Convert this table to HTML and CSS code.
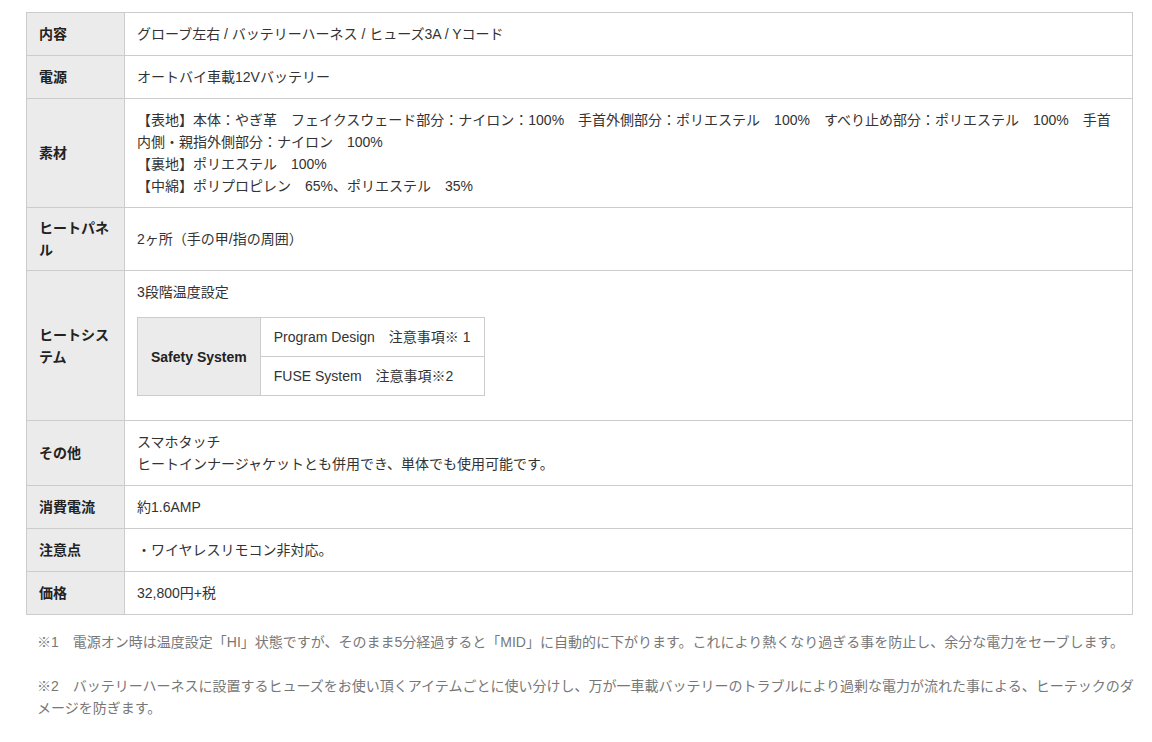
FILE: index.html
```html
<!DOCTYPE html>
<html lang="ja">
<head>
<meta charset="UTF-8">
<meta name="viewport" content="width=device-width, initial-scale=1.0">
<title>スペック</title>
<link rel="stylesheet" href="styles.css">
</head>
<body>

<div class="spec">
  <table class="spec-table">
    <tr>
      <th>内容</th>
      <td>グローブ左右 / バッテリーハーネス / ヒューズ3A / Yコード</td>
    </tr>
    <tr>
      <th>電源</th>
      <td>オートバイ車載12Vバッテリー</td>
    </tr>
    <tr>
      <th>素材</th>
      <td>【表地】本体：やぎ革　フェイクスウェード部分：ナイロン：100%　手首外側部分：ポリエステル　100%　すべり止め部分：ポリエステル　100%　手首内側・親指外側部分：ナイロン　100%<br>【裏地】ポリエステル　100%<br>【中綿】ポリプロピレン　65%、ポリエステル　35%</td>
    </tr>
    <tr>
      <th>ヒートパネル</th>
      <td>2ヶ所（手の甲/指の周囲）</td>
    </tr>
    <tr>
      <th>ヒートシステム</th>
      <td>
        <p class="cell-lead">3段階温度設定</p>
        <table class="sub-table">
          <tr>
            <th rowspan="2">Safety System</th>
            <td>Program Design　注意事項※ 1</td>
          </tr>
          <tr>
            <td>FUSE System　注意事項※2</td>
          </tr>
        </table>
      </td>
    </tr>
    <tr>
      <th>その他</th>
      <td>スマホタッチ<br>ヒートインナージャケットとも併用でき、単体でも使用可能です。</td>
    </tr>
    <tr>
      <th>消費電流</th>
      <td>約1.6AMP</td>
    </tr>
    <tr>
      <th>注意点</th>
      <td>・ワイヤレスリモコン非対応。</td>
    </tr>
    <tr>
      <th>価格</th>
      <td>32,800円+税</td>
    </tr>
  </table>

  <div class="notes">
    <p>※1　電源オン時は温度設定「HI」状態ですが、そのまま5分経過すると「MID」に自動的に下がります。これにより熱くなり過ぎる事を防止し、余分な電力をセーブします。</p>
    <p>※2　バッテリーハーネスに設置するヒューズをお使い頂くアイテムごとに使い分けし、万が一車載バッテリーのトラブルにより過剰な電力が流れた事による、ヒーテックのダメージを防ぎます。</p>
  </div>
</div>

</body>
</html>
```

FILE: styles.css
```css
/* Page */
body {
  margin: 0;
  background-color: #fff;
  color: #333;
  font-family: "Liberation Sans", "Noto Sans CJK JP", sans-serif;
  font-size: 14px;
  line-height: 22px;
}

.spec {
  width: 1107px;
  padding: 12px 0 0 26px;
}

/* Spec table */
.spec-table {
  width: 100%;
  border-collapse: collapse;
  border: 1px solid #ccc;
}

.spec-table th,
.spec-table td {
  border: 1px solid #ccc;
  padding: 10px 12px;
  vertical-align: middle;
  text-align: left;
}

.spec-table th {
  width: 73px;
  padding: 9px 12px;
  background-color: #ebebeb;
  font-weight: bold;
  color: #222;
}

.cell-lead {
  margin: 0 0 14px;
}

/* Nested table */
.spec-table .sub-table {
  border-collapse: collapse;
  margin-bottom: 14px;
}

.spec-table .sub-table th,
.spec-table .sub-table td {
  padding: 8px 13px;
}

.spec-table .sub-table th {
  width: auto;
  white-space: nowrap;
}

/* Footnotes */
.notes {
  margin: 16px -8px 0 11px;
  color: #777;
}

.notes p {
  margin: 0 0 22px;
}
```
